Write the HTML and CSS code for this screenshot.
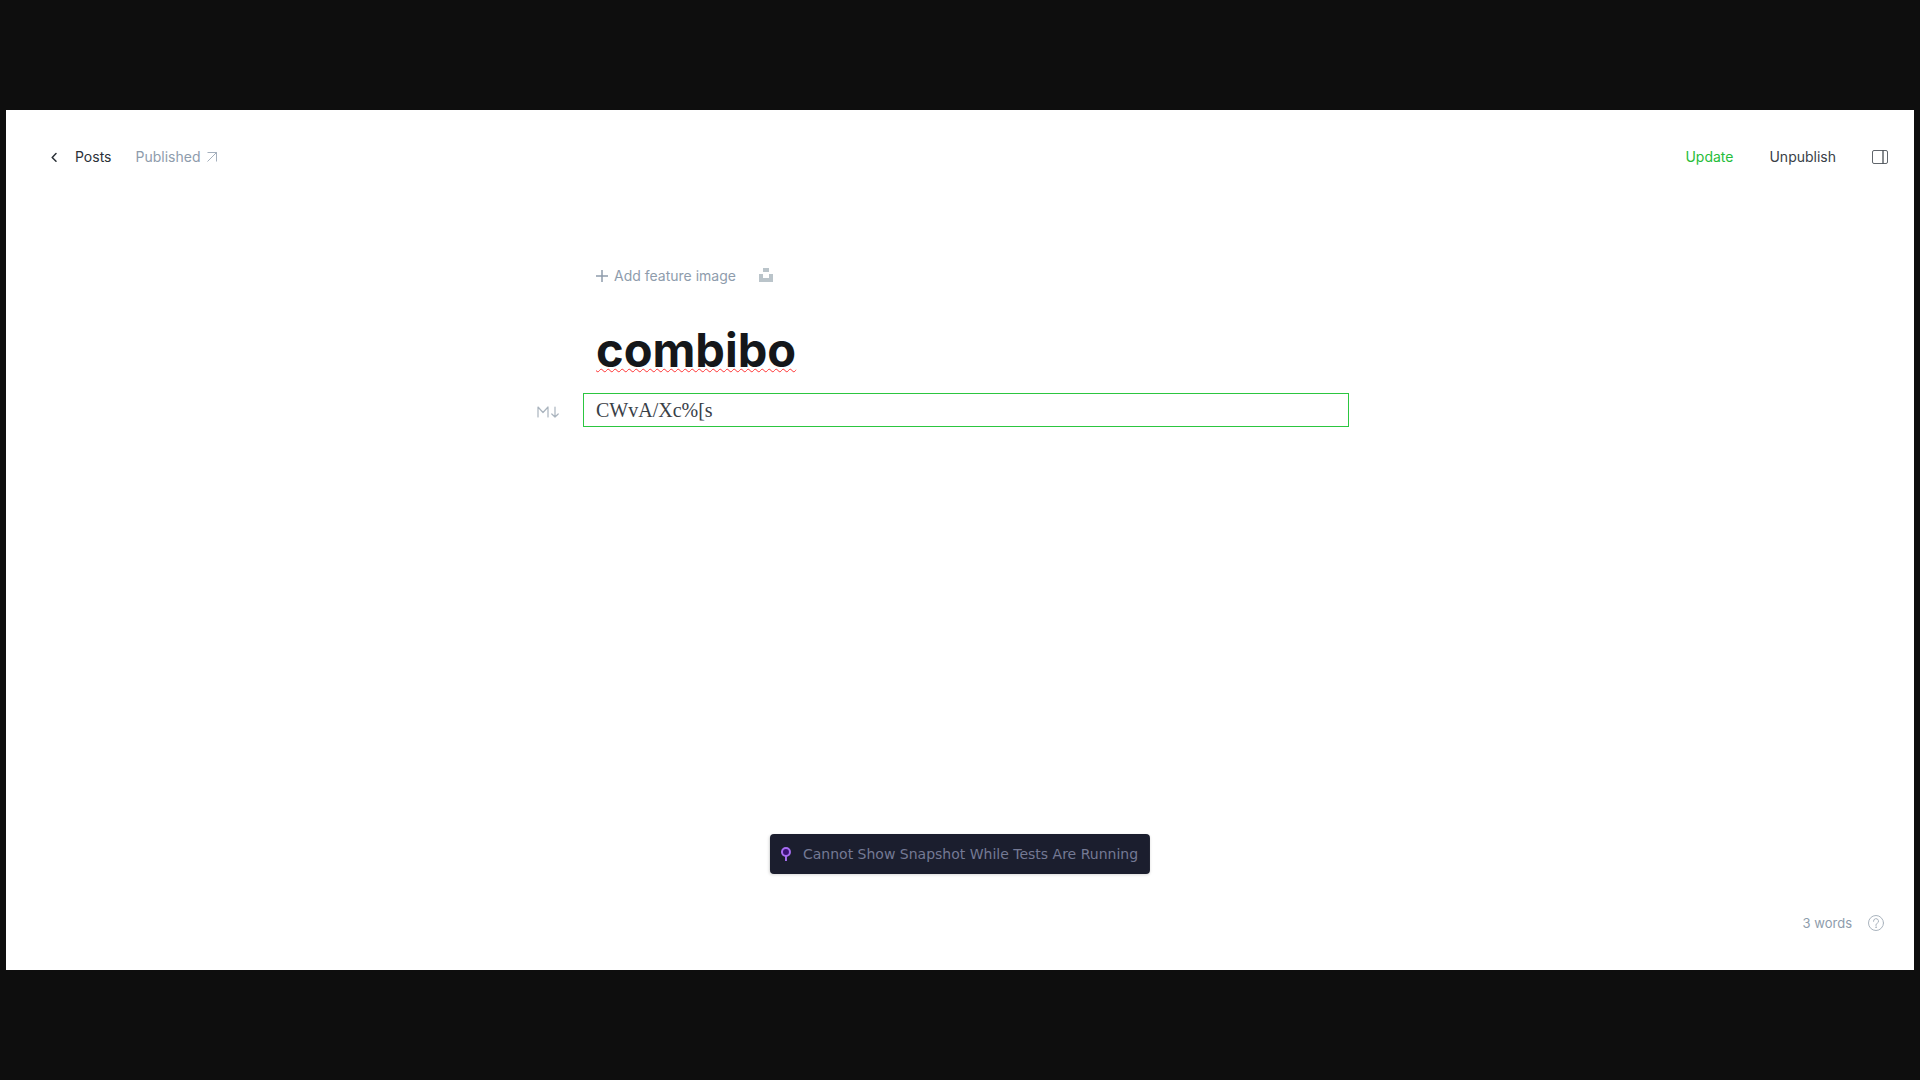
FILE: index.html
```html
<!DOCTYPE html>
<html lang="en">
<head>
<meta charset="utf-8">
<meta name="viewport" content="width=device-width, initial-scale=1">
<title>combibo</title>
<link rel="stylesheet" href="styles.css">
</head>
<body>
<div class="app">
  <header class="toolbar">
    <nav class="toolbar-start">
      <a class="back" href="#posts">
        <svg width="6" height="10" viewBox="0 0 6 10" fill="none" stroke="currentColor" stroke-width="1.5" stroke-linecap="round" stroke-linejoin="round"><path d="M5 1.5 1.200 5.500 5 9.300"/></svg>
        Posts
      </a>
      <a class="status" href="#view">
        Published
        <svg width="10" height="10" viewBox="0 0 10 10" fill="none" stroke="currentColor" stroke-opacity=".8"><path d="M.5.5h9v9M9.5.5l-9 9"/></svg>
      </a>
    </nav>
    <div class="toolbar-end">
      <button class="action action-update" type="button">Update</button>
      <button class="action" type="button">Unpublish</button>
      <button class="action action-settings" type="button" aria-label="Settings">
        <svg width="16" height="14" viewBox="0 0 16 14" fill="none" stroke="currentColor" stroke-opacity=".8"><rect x=".5" y=".5" width="15" height="13" rx="1.5"/><path d="M11 .5v13" stroke-width="1.5"/></svg>
      </button>
    </div>
  </header>

  <main class="editor">
    <div class="feature">
      <button class="feature-add" type="button">
        <svg width="12" height="12" viewBox="0 0 12 12" fill="none" stroke="currentColor" stroke-width="1.5"><path d="M6 0v12M0 6h12"/></svg>
        Add feature image
      </button>
      <button class="feature-unsplash" type="button" aria-label="Unsplash">
        <svg width="14" height="14" viewBox="0 0 14 14" fill="currentColor"><path d="M4 0h6v4H4zM0 6h4v4h6V6h4v8H0z"/></svg>
      </button>
    </div>
    <h1 class="title"><span class="misspelled">combibo</span></h1>
    <div class="card">
      <svg class="card-icon" width="22" height="12" viewBox="0 0 22 12" fill="none" stroke="currentColor" stroke-width="1.2" stroke-linecap="round" stroke-linejoin="round"><path d="M1 11V1l5 5.5L11 1v10M18 1v10M14.800 8l3.200 3 3.200-3"/></svg>
      <p class="card-text">CWvA/Xc%[s</p>
    </div>
  </main>

  <footer class="footer">
    <span>3 words</span>
    <a class="help" href="#help" aria-label="Help">
      <svg width="16" height="16" viewBox="0 0 16 16" fill="none" stroke="currentColor" stroke-linecap="round"><circle cx="8" cy="8" r="7.500"/><path d="M5.500 6.300a2.500 2.500 0 1 1 3.600 2.100C8.300 8.800 8 9.200 8 10v.5"/><circle cx="8" cy="12.200" r=".3"/></svg>
    </a>
  </footer>

  <div class="snapshot" role="status">
    <svg width="10" height="14" viewBox="0 0 10 14" fill="none" stroke="#a66cf0" stroke-width="2"><circle cx="5" cy="5" r="4" fill="#3b1276"/><path d="M5 9v5"/></svg>
    Cannot Show Snapshot While Tests Are Running
  </div>
</div>
</body>
</html>
```

FILE: styles.css
```css
* {
  box-sizing: border-box;
}

body {
  display: flex;
  min-height: 100vh;
  margin: 0;
  padding: 110px 6px;
  background: #0e0e0e;
  font-family: Inter, "Liberation Sans", sans-serif;
  font-size: 14px;
  line-height: 20px;
  color: #394047;
}

a {
  color: inherit;
  text-decoration: none;
}

button {
  padding: 0;
  border: 0;
  background: none;
  color: inherit;
  font: inherit;
  cursor: pointer;
}

svg {
  display: block;
  flex: none;
}

.app {
  position: relative;
  display: flex;
  flex: 1;
  flex-direction: column;
  background: #fff;
}

.toolbar {
  display: flex;
  justify-content: space-between;
  padding: 37px 26px 0 45px;
}

.toolbar-start,
.toolbar-end,
.back,
.status {
  display: flex;
  align-items: center;
}

.toolbar-start {
  gap: 24px;
}

.toolbar-end {
  gap: 36px;
}

.back {
  gap: 18px;
  color: #2b3137;
}

.status {
  gap: 7px;
  color: #8e9cac;
}

.action {
  color: #394047;
}

.action-update {
  color: #26bd3a;
}

.editor {
  flex: 1;
  width: 752px;
  max-width: 100%;
  margin: 0 auto;
  padding: 99px 0 0 12px;
}

.feature {
  display: flex;
  align-items: center;
  gap: 23px;
}

.feature-add {
  display: flex;
  align-items: center;
  gap: 6px;
  color: #8e9cac;
}

.feature-unsplash {
  padding-bottom: 2px;
  color: #bac4ca;
}

.title {
  margin: 32px 0 12px;
  font-size: 47px;
  line-height: 63px;
  font-weight: 700;
  color: #15171a;
}

.misspelled {
  text-decoration: underline wavy #f33 1px;
}

.card {
  position: relative;
  margin: 0 -13px;
  padding: 0 12px;
  border: 1px solid #2cc640;
}

.card-icon {
  position: absolute;
  top: 12px;
  right: 100%;
  margin-right: 25px;
  color: #aab4be;
}

.card-text {
  margin: 0;
  font-family: "Liberation Serif", serif;
  font-size: 20px;
  line-height: 32px;
}

.footer {
  display: flex;
  align-items: center;
  justify-content: flex-end;
  gap: 16px;
  padding: 0 30px 37px;
  font-size: 13px;
  color: #8e9cac;
}

.help {
  color: #aab4be;
}

.snapshot {
  position: absolute;
  bottom: 96px;
  left: 50%;
  display: flex;
  align-items: center;
  gap: 12px;
  padding: 0 12px 0 11px;
  border-radius: 4px;
  background: #1b1e2e;
  box-shadow: 0 1px 3px rgba(0, 0, 0, 0.15);
  font-family: "DejaVu Sans", sans-serif;
  line-height: 40px;
  color: #747994;
  white-space: nowrap;
  transform: translateX(-50%);
}
```
